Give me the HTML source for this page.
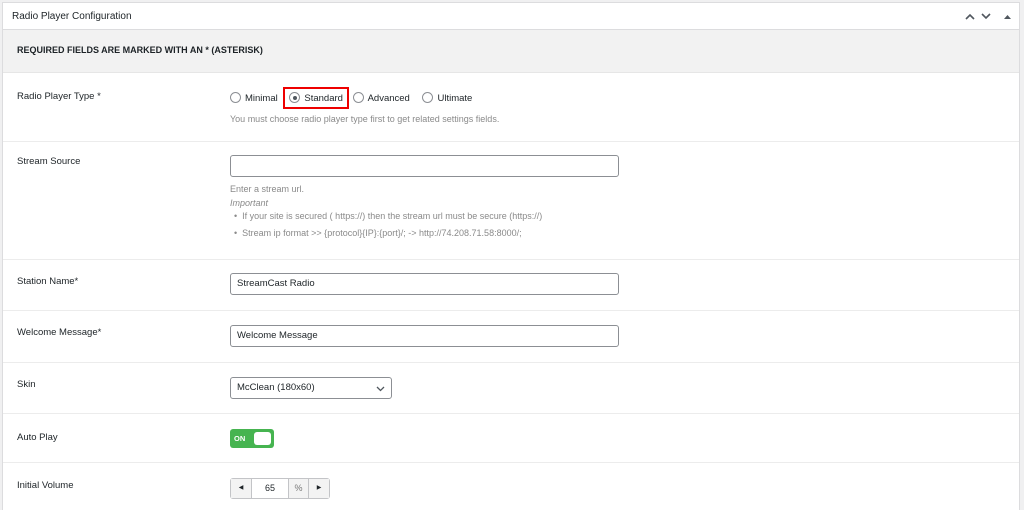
<!DOCTYPE html>
<html><head><style>
*{box-sizing:border-box;margin:0;padding:0}
html,body{width:1024px;height:510px;overflow:hidden}
body{background:#f0f0f1;font-family:"Liberation Sans",sans-serif;font-size:9.5px;color:#1d2327}
.box{position:absolute;left:2px;top:2px;width:1018px;height:508px;background:#fff;border:1px solid #dcdcde;border-bottom:0;overflow:hidden}
.hd{height:27px;border-bottom:1px solid #dcdcde;padding:8px 9px;font-size:10px;position:relative}
.req{height:43px;background:#f2f2f2;padding:15px 14px;font-weight:bold;font-size:9px;border-bottom:1px solid #e6e6e6}
.row{position:absolute;left:0;width:1016px;border-bottom:1px solid #ececec}
.lbl{position:absolute;left:14px;font-size:9.5px}
.f{position:absolute;left:226px}
.inp{position:absolute;left:227px;width:389px;height:22px;border:1px solid #8c8f94;border-radius:3px;padding:4px 6px;font-size:9.5px}
.muted{color:#8a8a8a;font-size:9px}
.r{display:inline-block;width:11px;height:11px;border:1px solid #8c8f94;border-radius:50%;vertical-align:-2px;margin-right:4px;position:relative}
</style></head><body>
<div class="box">
<div class="hd">Radio Player Configuration
<svg style="position:absolute;right:28px;top:10px" width="10" height="7"><path d="M1 1l4 4 4-4" stroke="#50575e" stroke-width="1.6" fill="none"/></svg>
<svg style="position:absolute;right:44px;top:10px" width="10" height="7"><path d="M1 6l4-4 4 4" stroke="#50575e" stroke-width="1.6" fill="none"/></svg>
<svg style="position:absolute;right:8px;top:11px" width="7" height="5"><path d="M0 5l3.5-4 3.5 4z" fill="#50575e"/></svg>
</div>
<div class="req">REQUIRED FIELDS ARE MARKED WITH AN * (ASTERISK)</div>
<div class="row" style="top:71px;height:68px">
 <div class="lbl" style="top:17px">Radio Player Type *</div>
 <div class="f" style="top:13px;left:227px;white-space:nowrap">
  <span class="r"></span>Minimal
  <span style="display:inline-block;border:2px solid #e00;padding:3px 4px 3px 4px;margin-left:3px"><span class="r"><span style="position:absolute;left:2.5px;top:2.5px;width:4px;height:4px;border-radius:50%;background:#50575e"></span></span>Standard</span>
  <span class="r" style="margin-left:1px"></span>Advanced
  <span class="r" style="margin-left:10px"></span>Ultimate
 </div>
 <div class="f muted" style="top:40px;left:227px">You must choose radio player type first to get related settings fields.</div>
</div>
<div class="row" style="top:139px;height:118px">
 <div class="lbl" style="top:14px">Stream Source</div>
 <div class="inp" style="top:13px"></div>
 <div class="f muted" style="top:41px;left:227px;line-height:13.5px">Enter a stream url.<br><i>Important</i>
 <div style="padding-left:4px">• &nbsp;If your site is secured ( https://) then the stream url must be secure (https://)</div>
 <div style="padding-left:4px;margin-top:3px">• &nbsp;Stream ip format &gt;&gt; {protocol}{IP}:{port}/; -&gt; http://74.208.71.58:8000/;</div></div>
</div>
<div class="row" style="top:257px;height:51px">
 <div class="lbl" style="top:16px">Station Name*</div>
 <div class="inp" style="top:13px">StreamCast Radio</div>
</div>
<div class="row" style="top:308px;height:52px">
 <div class="lbl" style="top:16px">Welcome Message*</div>
 <div class="inp" style="top:14px">Welcome Message</div>
</div>
<div class="row" style="top:360px;height:51px">
 <div class="lbl" style="top:16px">Skin</div>
 <div class="inp" style="top:14px;width:162px">McClean (180x60)
 <svg style="position:absolute;right:6px;top:8px" width="9" height="6"><path d="M1 1l3.5 3.5 3.5-3.5" stroke="#50575e" stroke-width="1.3" fill="none"/></svg></div>
</div>
<div class="row" style="top:411px;height:49px">
 <div class="lbl" style="top:18px">Auto Play</div>
 <div style="position:absolute;left:227px;top:15px;width:44px;height:19px;background:#46b450;border-radius:3px;color:#fff;font-size:7.5px;font-weight:bold;padding:5px 4px">ON<span style="position:absolute;right:3px;top:3px;width:17px;height:13px;background:#fff;border-radius:3px"></span></div>
</div>
<div class="row" style="top:460px;height:60px;border:0">
 <div class="lbl" style="top:17px">Initial Volume</div>
 <div style="position:absolute;left:227px;top:15px;width:100px;height:21px;border:1px solid #c3c4c7;border-radius:3px;display:flex;font-size:9px">
  <div style="width:21px;background:#f3f3f3;border-right:1px solid #c3c4c7;text-align:center;line-height:19px;font-size:6px">◀</div>
  <div style="width:36px;text-align:center;line-height:19px">65</div>
  <div style="width:21px;background:#f3f3f3;border-left:1px solid #c3c4c7;border-right:1px solid #c3c4c7;text-align:center;line-height:19px;color:#777">%</div>
  <div style="flex:1;background:#f3f3f3;text-align:center;line-height:19px;font-size:6px">▶</div>
 </div>
</div>
</div>
</body></html>
